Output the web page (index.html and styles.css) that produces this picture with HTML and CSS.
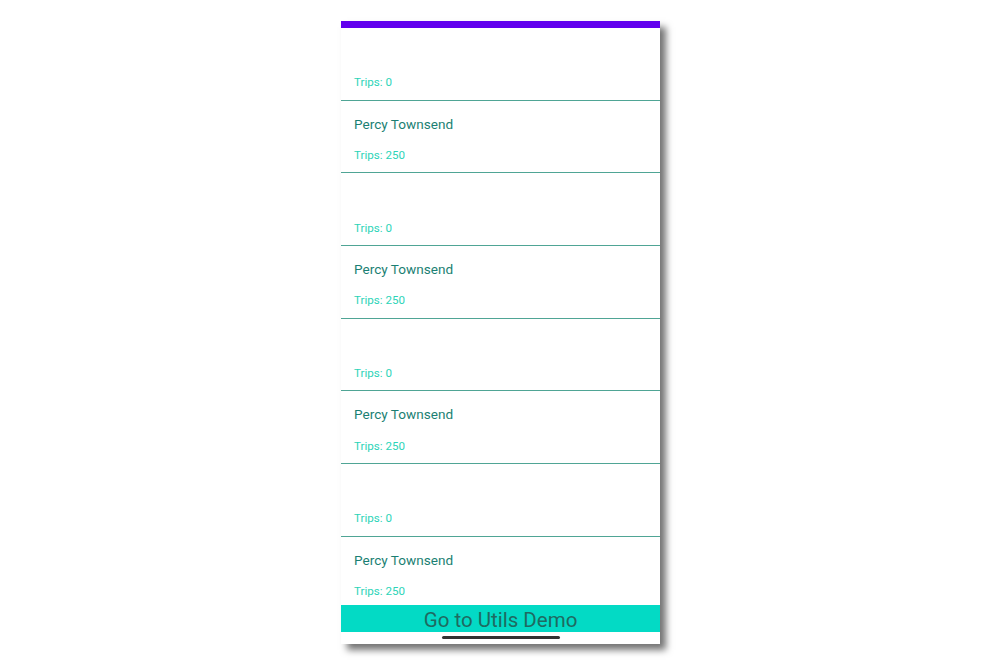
FILE: index.html
```html
<!DOCTYPE html>
<html>
<head>
<meta charset="utf-8">
<link rel="stylesheet" href="styles.css">
</head>
<body>
<div class="phone">
  <div class="status"></div>
  <div class="list">
    <div class="row"><div class="name"></div><div class="trips">Trips: 0</div></div>
    <div class="row"><div class="name">Percy Townsend</div><div class="trips">Trips: 250</div></div>
    <div class="row"><div class="name"></div><div class="trips">Trips: 0</div></div>
    <div class="row"><div class="name">Percy Townsend</div><div class="trips">Trips: 250</div></div>
    <div class="row"><div class="name"></div><div class="trips">Trips: 0</div></div>
    <div class="row"><div class="name">Percy Townsend</div><div class="trips">Trips: 250</div></div>
    <div class="row"><div class="name"></div><div class="trips">Trips: 0</div></div>
    <div class="row"><div class="name">Percy Townsend</div><div class="trips">Trips: 250</div></div>
  </div>
  <div class="button">Go to Utils Demo</div>
  <div class="nav"><div class="indicator"></div></div>
</div>
</body>
</html>
```
FILE: styles.css
```css
html, body {
  margin: 0;
  padding: 0;
  background: #ffffff;
}
body {
  width: 1000px;
  height: 667px;
  overflow: hidden;
  font-family: Roboto, "Liberation Sans", sans-serif;
}
.phone {
  width: 319px;
  height: 623px;
  margin: 21px 0 0 341px;
  background: #ffffff;
  display: flex;
  flex-direction: column;
  box-shadow: 6px 6px 7px rgba(0, 0, 0, 0.55);
}
.status {
  height: 7px;
  background: #6200ee;
  flex: none;
}
.list {
  flex: 1;
  overflow: hidden;
}
.row {
  height: 72.67px;
  box-sizing: border-box;
  border-bottom: 1px solid #4fa595;
  padding: 14px 0 0 13px;
}
.name {
  height: 18px;
  line-height: 18px;
  font-size: 13.6px;
  color: #1b7f73;
}
.trips {
  margin-top: 15.3px;
  line-height: 14px;
  font-size: 11.6px;
  color: #2dd4b8;
}
.button {
  flex: none;
  height: 27px;
  background: #03dac5;
  color: #1f6a61;
  font-size: 20.5px;
  line-height: 30px;
  text-align: center;
}
.nav {
  flex: none;
  height: 12px;
  display: flex;
  justify-content: center;
  padding-top: 4px;
  box-sizing: border-box;
}
.indicator {
  width: 118px;
  height: 3px;
  border-radius: 2px;
  background: #333333;
}
```
